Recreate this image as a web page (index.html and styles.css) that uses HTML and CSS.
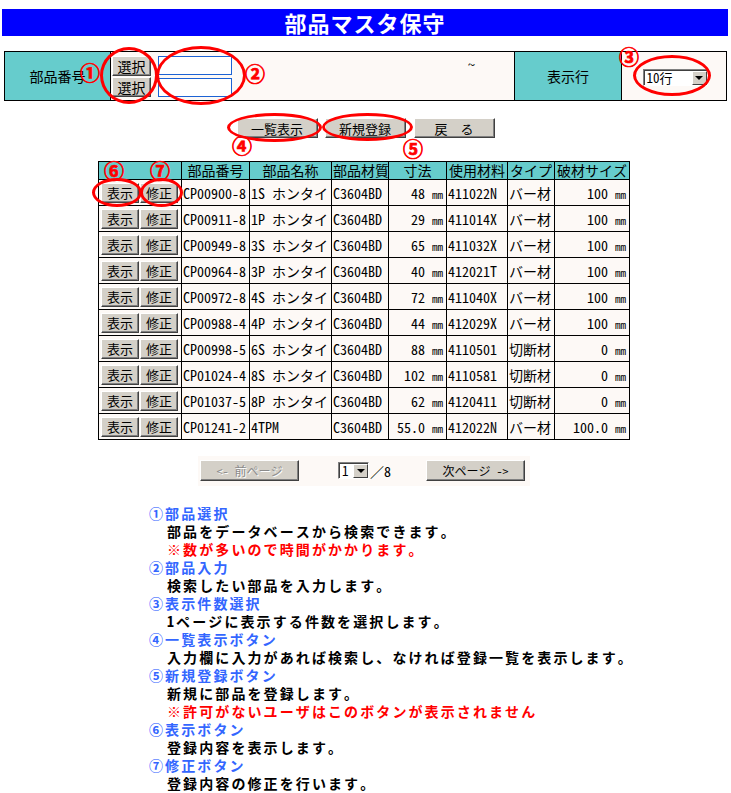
FILE: index.html
```html
<!DOCTYPE html>
<html lang="ja">
<head>
<meta charset="utf-8">
<title>部品マスタ保守</title>
<link rel="stylesheet" href="styles.css">
</head>
<body>
<div class="page">
  <h1 class="title">部品マスタ保守</h1>

  <table class="search">
    <tr>
      <th class="lbl lbl-part">部品番号</th>
      <td class="range">
        <div class="range-inner">
          <div class="pick-col">
            <button class="btn btn-pick">選択</button>
            <button class="btn btn-pick">選択</button>
          </div>
          <div class="input-col">
            <input class="txt" type="text">
            <input class="txt" type="text">
          </div>
          <span class="tilde">~</span>
        </div>
      </td>
      <th class="lbl lbl-rows">表示行</th>
      <td class="rows-cell">
        <div class="fake-select sel-rows"><span class="sel-val">10行</span><span class="sel-arrow"><span class="tri"></span></span></div>
      </td>
    </tr>
  </table>

  <div class="actions">
    <button class="btn btn-act">一覧表示</button>
    <button class="btn btn-act">新規登録</button>
    <button class="btn btn-act btn-back">戻　る</button>
  </div>

  <table class="list">
    <colgroup>
      <col class="c-btn"><col class="c-no"><col class="c-name"><col class="c-mat"><col class="c-size"><col class="c-use"><col class="c-type"><col class="c-cut">
    </colgroup>
    <thead>
      <tr><th></th><th>部品番号</th><th>部品名称</th><th>部品材質</th><th>寸法</th><th>使用材料</th><th>タイプ</th><th>破材サイズ</th></tr>
    </thead>
    <tbody>
      <tr><td class="ops"><button class="btn btn-row">表示</button><button class="btn btn-row">修正</button></td><td>CP00900-8</td><td>1S ホンタイ</td><td>C3604BD</td><td class="num">48 <small>mm</small></td><td>411022N</td><td>バー材</td><td class="num">100 <small>mm</small></td></tr>
      <tr><td class="ops"><button class="btn btn-row">表示</button><button class="btn btn-row">修正</button></td><td>CP00911-8</td><td>1P ホンタイ</td><td>C3604BD</td><td class="num">29 <small>mm</small></td><td>411014X</td><td>バー材</td><td class="num">100 <small>mm</small></td></tr>
      <tr><td class="ops"><button class="btn btn-row">表示</button><button class="btn btn-row">修正</button></td><td>CP00949-8</td><td>3S ホンタイ</td><td>C3604BD</td><td class="num">65 <small>mm</small></td><td>411032X</td><td>バー材</td><td class="num">100 <small>mm</small></td></tr>
      <tr><td class="ops"><button class="btn btn-row">表示</button><button class="btn btn-row">修正</button></td><td>CP00964-8</td><td>3P ホンタイ</td><td>C3604BD</td><td class="num">40 <small>mm</small></td><td>412021T</td><td>バー材</td><td class="num">100 <small>mm</small></td></tr>
      <tr><td class="ops"><button class="btn btn-row">表示</button><button class="btn btn-row">修正</button></td><td>CP00972-8</td><td>4S ホンタイ</td><td>C3604BD</td><td class="num">72 <small>mm</small></td><td>411040X</td><td>バー材</td><td class="num">100 <small>mm</small></td></tr>
      <tr><td class="ops"><button class="btn btn-row">表示</button><button class="btn btn-row">修正</button></td><td>CP00988-4</td><td>4P ホンタイ</td><td>C3604BD</td><td class="num">44 <small>mm</small></td><td>412029X</td><td>バー材</td><td class="num">100 <small>mm</small></td></tr>
      <tr><td class="ops"><button class="btn btn-row">表示</button><button class="btn btn-row">修正</button></td><td>CP00998-5</td><td>6S ホンタイ</td><td>C3604BD</td><td class="num">88 <small>mm</small></td><td>4110501</td><td>切断材</td><td class="num">0 <small>mm</small></td></tr>
      <tr><td class="ops"><button class="btn btn-row">表示</button><button class="btn btn-row">修正</button></td><td>CP01024-4</td><td>8S ホンタイ</td><td>C3604BD</td><td class="num">102 <small>mm</small></td><td>4110581</td><td>切断材</td><td class="num">0 <small>mm</small></td></tr>
      <tr><td class="ops"><button class="btn btn-row">表示</button><button class="btn btn-row">修正</button></td><td>CP01037-5</td><td>8P ホンタイ</td><td>C3604BD</td><td class="num">62 <small>mm</small></td><td>4120411</td><td>切断材</td><td class="num">0 <small>mm</small></td></tr>
      <tr><td class="ops"><button class="btn btn-row">表示</button><button class="btn btn-row">修正</button></td><td>CP01241-2</td><td>4TPM</td><td>C3604BD</td><td class="num">55.0 <small>mm</small></td><td>412022N</td><td>バー材</td><td class="num">100.0 <small>mm</small></td></tr>
    </tbody>
  </table>

  <div class="pager">
    <button class="btn btn-page" disabled>&lt;- 前ページ</button>
    <div class="page-sel">
      <div class="fake-select sel-page"><span class="sel-val">1</span><span class="sel-arrow"><span class="tri"></span></span></div>
      <span class="of">／8</span>
    </div>
    <button class="btn btn-page">次ページ -&gt;</button>
  </div>

  <dl class="help">
    <dt>①部品選択</dt>
    <dd>部品をデータベースから検索できます。</dd>
    <dd class="warn">※数が多いので時間がかかります。</dd>
    <dt>②部品入力</dt>
    <dd>検索したい部品を入力します。</dd>
    <dt>③表示件数選択</dt>
    <dd>1ページに表示する件数を選択します。</dd>
    <dt>④一覧表示ボタン</dt>
    <dd>入力欄に入力があれば検索し、なければ登録一覧を表示します。</dd>
    <dt>⑤新規登録ボタン</dt>
    <dd>新規に部品を登録します。</dd>
    <dd class="warn">※許可がないユーザはこのボタンが表示されません</dd>
    <dt>⑥表示ボタン</dt>
    <dd>登録内容を表示します。</dd>
    <dt>⑦修正ボタン</dt>
    <dd>登録内容の修正を行います。</dd>
  </dl>
</div>

<div class="marks" aria-hidden="true">
  <span class="ring r1"></span>
  <span class="ring r2"></span>
  <span class="ring r3"></span>
  <span class="ring r4"></span>
  <span class="ring r5"></span>
  <span class="ring r6"></span>
  <span class="ring r7"></span>
  <span class="mk m1">①</span>
  <span class="mk m2">②</span>
  <span class="mk m3">③</span>
  <span class="mk m4">④</span>
  <span class="mk m5">⑤</span>
  <span class="mk m6">⑥</span>
  <span class="mk m7">⑦</span>
</div>
</body>
</html>
```

FILE: styles.css
```css
html, body {
  margin: 0;
  padding: 0;
  background: #ffffff;
}

body {
  position: relative;
  font-family: "Noto Sans Mono CJK JP", "Noto Sans CJK JP", "DejaVu Sans", sans-serif;
  font-size: 14px;
  color: #000;
}

.page {
  padding: 9px 3px 0 2px;
}

.title {
  margin: 0;
  height: 27px;
  line-height: 27px;
  background: #0000ff;
  color: #ffffff;
  font-size: 22px;
  font-weight: bold;
  text-align: center;
  letter-spacing: 1px;
}

/* ---------- search panel ---------- */
.search {
  margin: 15px 1px 0 2px;
  width: 723px;
  border-collapse: collapse;
  table-layout: fixed;
  border: 1px solid #000;
}

.search th,
.search td {
  border: 1px solid #000;
  padding: 0;
  height: 48px;
}

.lbl {
  background: #66cccc;
  font-weight: normal;
  text-align: center;
  font-size: 14px;
}

.lbl-part { width: 105px; }
.lbl-rows { width: 106px; }
.rows-cell { width: 104px; background: #fdf9f6; text-align: center; }

.range {
  background: #fdf9f6;
}

.range-inner {
  display: flex;
  align-items: center;
  padding-left: 1px;
}

.pick-col {
  display: flex;
  flex-direction: column;
  gap: 1px;
}

.input-col {
  display: flex;
  flex-direction: column;
  gap: 3px;
  margin-left: 7px;
}

.txt {
  box-sizing: border-box;
  width: 74px;
  height: 19px;
  margin: 0;
  border: 1px solid #1c62d4;
  background: #fff;
  padding: 0 2px;
}

.tilde {
  align-self: flex-start;
  margin-top: -2px;
  margin-left: 236px;
  font-size: 14px;
}

/* ---------- buttons ---------- */
.btn {
  box-sizing: border-box;
  font-family: "Noto Sans Mono CJK JP", "Noto Sans CJK JP", sans-serif;
  font-size: 13px;
  color: #000;
  background: #d4d0c8;
  border: 1px solid;
  border-color: #ffffff #404040 #404040 #ffffff;
  box-shadow: inset -1px -1px 0 #808080;
  padding: 0;
  margin: 0;
  line-height: 1;
  cursor: default;
}

.btn-pick {
  width: 39px;
  height: 20px;
  font-size: 14px;
}

.actions {
  display: flex;
  justify-content: center;
  gap: 7px;
  margin-top: 17px;
  padding-left: 1px;
}

.btn-act {
  width: 81px;
  height: 20px;
  font-size: 13px;
}

.btn-back {
  margin-left: 1px;
}

/* ---------- list table ---------- */
.list {
  margin: 23px auto 0;
  border-collapse: collapse;
  table-layout: fixed;
  width: 532px;
  position: relative;
  left: -1px;
}

.c-btn { width: 83px; }
.c-no { width: 68px; }
.c-name { width: 82px; }
.c-mat { width: 57px; }
.c-size { width: 58px; }
.c-use { width: 61px; }
.c-type { width: 47px; }
.c-cut { width: 75px; }

.list th,
.list td {
  border: 1px solid #000;
  padding: 0 1px;
  white-space: nowrap;
  overflow: hidden;
}

.list th {
  background: #66cccc;
  font-weight: normal;
  height: 17px;
  line-height: 17px;
  text-align: center;
  font-size: 14px;
}

.list td {
  background: #fdf9f6;
  height: 25px;
  font-size: 14px;
}

.list td.num {
  text-align: right;
  padding-right: 3px;
}

.list td.num small {
  font-size: 11px;
}

.list td.ops {
  padding: 0 0 0 2px;
  font-size: 0;
}

.btn-row {
  width: 38px;
  height: 20px;
  font-size: 13px;
  vertical-align: middle;
}

.btn-row + .btn-row {
  margin-left: 1px;
}

/* ---------- pager ---------- */
.pager {
  display: flex;
  align-items: center;
  width: 330px;
  margin: 16px 0 0 196px;
  padding: 4px 0 5px 2px;
  background: #fdf9f6;
}

.btn-page {
  width: 99px;
  height: 21px;
  font-size: 12px;
}

.btn-page[disabled] {
  color: #8a8a8a;
  text-shadow: 1px 1px 0 #ffffff;
}

.page-sel {
  display: flex;
  align-items: center;
  margin-left: 39px;
  margin-right: 35px;
}

.of {
  margin-left: 1px;
  font-size: 14px;
}

/* ---------- fake selects ---------- */
.fake-select {
  box-sizing: border-box;
  display: inline-flex;
  align-items: stretch;
  background: #fff;
  border: 1px solid;
  border-color: #808080 #ffffff #ffffff #808080;
  box-shadow: inset 1px 1px 0 #404040;
  vertical-align: middle;
}

.sel-rows {
  width: 65px;
  height: 17px;
  margin-left: 2px;
}

.sel-page {
  width: 31px;
  height: 17px;
}

.sel-val {
  flex: 1;
  text-align: left;
  font-size: 13px;
  line-height: 15px;
  padding-left: 3px;
}

.sel-arrow {
  box-sizing: border-box;
  width: 15px;
  margin: 1px 0 0 0;
  background: #d4d0c8;
  border: 1px solid;
  border-color: #ffffff #404040 #404040 #ffffff;
  display: flex;
  align-items: center;
  justify-content: center;
}

.tri {
  width: 0;
  height: 0;
  border-left: 4px solid transparent;
  border-right: 4px solid transparent;
  border-top: 4px solid #000;
}

/* ---------- help ---------- */
.help {
  margin: 18px 0 0 147px;
  padding: 0;
  font-weight: bold;
  font-size: 14px;
  line-height: 18px;
  letter-spacing: 2.1px;
}

.help dt {
  color: #3366ff;
  height: 18px;
}

.help dd {
  margin: 0 0 0 18px;
  color: #000;
  height: 18px;
}

.help dd.warn {
  color: #ff0000;
}

/* ---------- annotation overlay ---------- */
.marks {
  position: absolute;
  left: 0;
  top: 0;
  width: 0;
  height: 0;
}

.ring {
  position: absolute;
  box-sizing: border-box;
  border: 3px solid #ff0000;
  border-radius: 50%;
}

.r1 { left: 100px; top: 47px; width: 58px; height: 57px; }
.r2 { left: 156px; top: 46px; width: 90px; height: 59px; }
.r3 { left: 633px; top: 55px; width: 78px; height: 41px; }
.r4 { left: 227px; top: 113px; width: 95px; height: 29px; }
.r5 { left: 322px; top: 113px; width: 91px; height: 28px; }
.r6 { left: 92px; top: 178px; width: 50px; height: 29px; }
.r7 { left: 140px; top: 178px; width: 43px; height: 29px; }

.mk {
  position: absolute;
  color: #ff0000;
  font-family: "Noto Sans CJK JP", sans-serif;
  font-size: 20px;
  font-weight: bold;
  line-height: 1;
  -webkit-text-stroke: 0.7px #ff0000;
  transform: translate(-50%, -50%);
}

.m1 { left: 90px; top: 73px; }
.m2 { left: 255px; top: 74px; }
.m3 { left: 629px; top: 57px; }
.m4 { left: 242px; top: 146px; }
.m5 { left: 413px; top: 149px; }
.m6 { left: 114px; top: 171px; }
.m7 { left: 160px; top: 171px; }
```
